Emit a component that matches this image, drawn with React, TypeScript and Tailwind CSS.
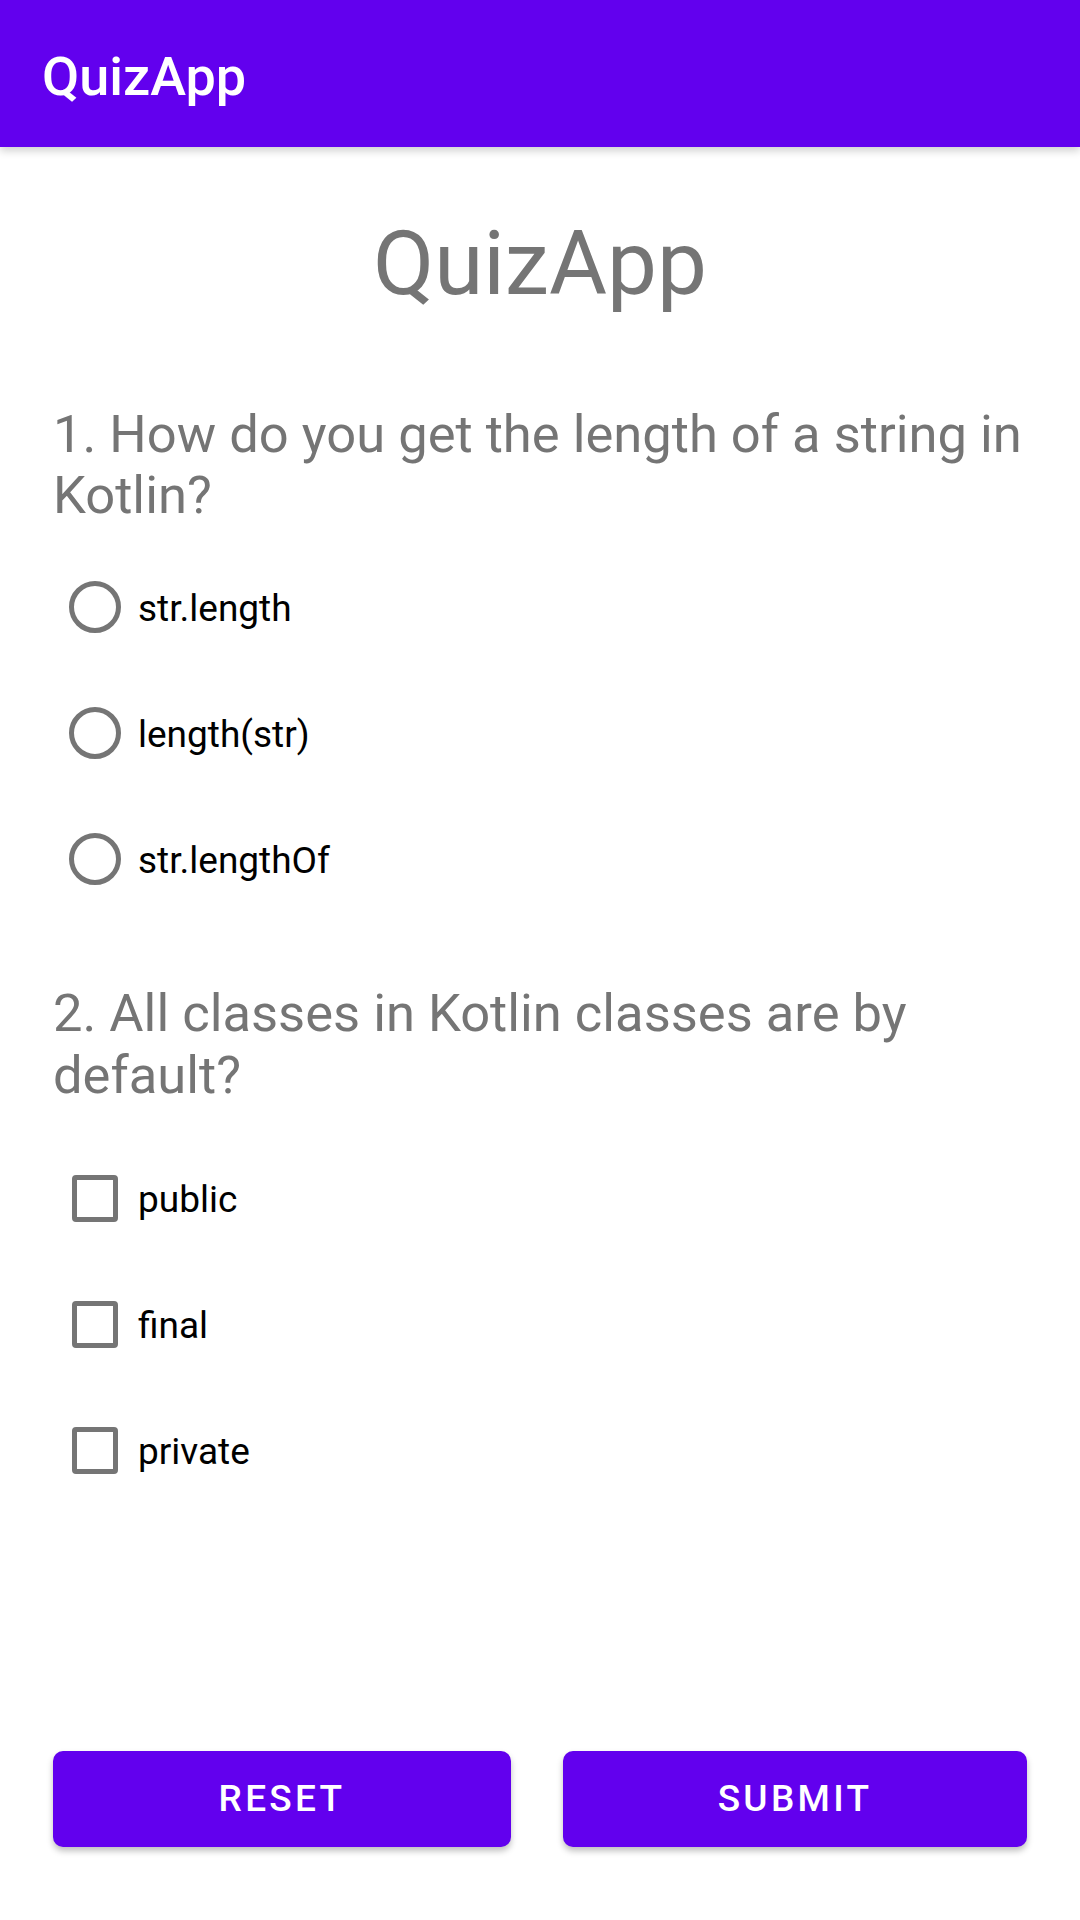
import React, { useState } from 'react';

const questionOne = ['str.length', 'length(str)', 'str.lengthOf'];
const questionTwo = ['public', 'final', 'private'];

const App: React.FC = () => {
  const [answer, setAnswer] = useState<string | null>(null);
  const [checked, setChecked] = useState<string[]>([]);

  const toggle = (opt: string) => {
    setChecked(checked.includes(opt) ? checked.filter((c) => c !== opt) : [...checked, opt]);
  };

  const reset = () => {
    setAnswer(null);
    setChecked([]);
  };

  return (
    <div className="w-[1080px] h-[1920px] bg-white flex flex-col font-['Roboto','Liberation_Sans',sans-serif]">
      {/* Toolbar */}
      <div className="h-[147px] bg-[#6200ee] flex items-center pl-[42px] pt-[7px] shadow-[0_4px_8px_rgba(0,0,0,0.18)] relative z-10">
        <h1 className="text-white text-[54px] font-medium leading-none">QuizApp</h1>
      </div>

      {/* Heading */}
      <div className="mt-[65px] text-center text-[#757575] text-[89px] leading-[104px]">QuizApp</div>

      {/* Question 1 */}
      <div className="mt-[88px] pl-[53px] pr-[40px] text-[#757575] text-[52.5px] leading-[61px]">
        1. How do you get the length of a string in Kotlin?
      </div>
      <div className="mt-[18px] flex flex-col">
        {questionOne.map((opt) => (
          <button
            key={opt}
            onClick={() => setAnswer(opt)}
            className="h-[126px] flex items-center pl-[69px] text-left"
          >
            <span className="w-[52px] h-[52px] rounded-full border-[5px] border-[#757575] flex items-center justify-center shrink-0">
              {answer === opt && <span className="w-[26px] h-[26px] rounded-full bg-[#757575]" />}
            </span>
            <span className="ml-[17px] pt-[4px] text-[37px] text-black">{opt}</span>
          </button>
        ))}
      </div>

      {/* Question 2 */}
      <div className="mt-[60px] pl-[53px] pr-[40px] text-[#757575] text-[52.5px] leading-[62px]">
        2. All classes in Kotlin classes are by default?
      </div>
      <div className="mt-[29px] flex flex-col">
        {questionTwo.map((opt) => (
          <button
            key={opt}
            onClick={() => toggle(opt)}
            className="h-[126px] flex items-center pl-[72px] text-left"
          >
            <span className="w-[46px] h-[47px] rounded-[4px] border-[5px] border-[#757575] flex items-center justify-center shrink-0">
              {checked.includes(opt) && <span className="text-[#757575] text-[30px] leading-none">✓</span>}
            </span>
            <span className="ml-[20px] pt-[4px] text-[37px] text-black">{opt}</span>
          </button>
        ))}
      </div>

      {/* Actions */}
      <div className="mt-auto mb-[73px] flex px-[53px] gap-[52px]">
        <button
          onClick={reset}
          className="w-[458px] h-[96px] rounded-[10px] bg-[#6200ee] text-white text-[37px] font-medium tracking-[3.3px] shadow-[0_4px_6px_rgba(0,0,0,0.25)]"
        >
          RESET
        </button>
        <button className="w-[464px] h-[96px] rounded-[10px] bg-[#6200ee] text-white text-[37px] font-medium tracking-[3.3px] shadow-[0_4px_6px_rgba(0,0,0,0.25)]">
          SUBMIT
        </button>
      </div>
    </div>
  );
};

export default App;
